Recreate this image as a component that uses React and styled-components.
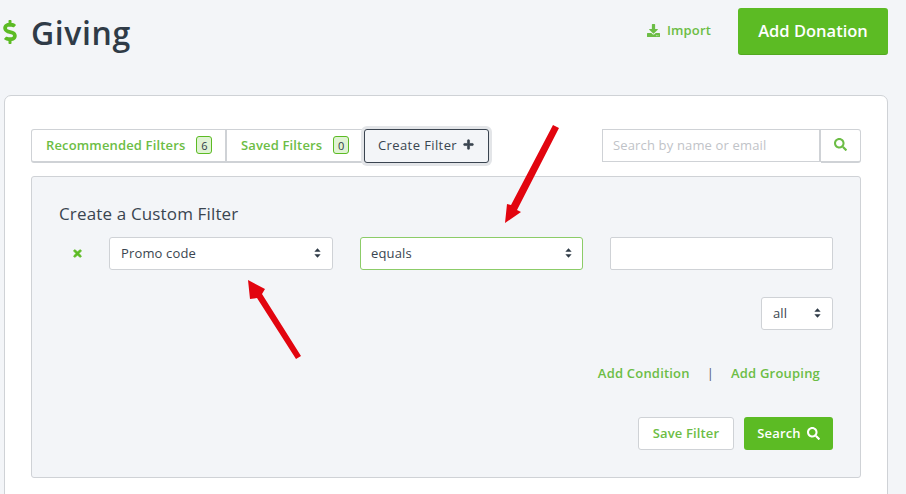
import React from "react";
import styled, { createGlobalStyle } from "styled-components";
import { FaDollarSign, FaDownload, FaPlus, FaSearch, FaTimes } from "react-icons/fa";

const green = "#5cbb24";
const linkGreen = "#6cbd45";

const GlobalStyle = createGlobalStyle`
  html, body {
    margin: 0;
    padding: 0;
    background: #f3f5f8;
    overflow: hidden;
  }
  * { box-sizing: border-box; }
`;

function Sort() {
  return (
    <SortIcon viewBox="0 0 8 11">
      <path d="M4 0 L7.6 4.2 H0.4 Z M4 11 L0.4 6.8 H7.6 Z" fill="#2f3b47" />
    </SortIcon>
  );
}

function App() {
  return (
    <Page>
      <GlobalStyle />
      <Header>
        <TitleWrap>
          <Dollar />
          <Title>Giving</Title>
        </TitleWrap>
        <HeaderActions>
          <ImportLink>
            <FaDownload size={13} />
            Import
          </ImportLink>
          <AddButton>Add Donation</AddButton>
        </HeaderActions>
      </Header>
      <Card>
        <TopRow>
          <Tabs>
            <Tab>
              Recommended Filters <Badge>6</Badge>
            </Tab>
            <Tab second>
              Saved Filters <Badge>0</Badge>
            </Tab>
            <ActiveTab>
              Create Filter <BoldPlus />
            </ActiveTab>
          </Tabs>
          <SearchBox>
            <SearchInput placeholder="Search by name or email" />
            <SearchBtn>
              <FaSearch size={13} />
            </SearchBtn>
          </SearchBox>
        </TopRow>
        <Panel>
          <PanelTitle>Create a Custom Filter</PanelTitle>
          <ConditionRow>
            <RemoveIcon />
            <Select width="224px">
              <span>Promo code</span>
              <Sort />
            </Select>
            <Select width="223px" focused pad="10px">
              <span>equals</span>
              <Sort />
            </Select>
            <TextBox />
          </ConditionRow>
          <AllRow>
            <Select width="72px">
              <span>all</span>
              <Sort />
            </Select>
          </AllRow>
          <LinksRow>
            <TextLink>Add Condition</TextLink>
            <Divider>|</Divider>
            <TextLink>Add Grouping</TextLink>
          </LinksRow>
          <ButtonRow>
            <SaveButton>Save Filter</SaveButton>
            <SearchButton>
              Search <FaSearch size={13} />
            </SearchButton>
          </ButtonRow>
        </Panel>
      </Card>
      <Arrow viewBox="0 0 906 494">
        <path
          fill="#e2050f"
          d="M296 359 L301 356 L262 294 L265 289 L248 280 L250 299 L257 298 Z"
        />
        <path
          fill="#e2050f"
          d="M553 125 L559 128 L517 210 L521 212 L505 223 L507 204 L511 205 Z"
        />
      </Arrow>
    </Page>
  );
}

export default App;

const Page = styled.div`
  position: relative;
  width: 906px;
  height: 494px;
  overflow: hidden;
  background: #f3f5f8;
  font-family: "Open Sans", "Liberation Sans", sans-serif;
  font-size: 13px;
  letter-spacing: 0.15px;
  color: #3a4550;
`;
const Header = styled.div`
  display: flex;
  justify-content: space-between;
  align-items: flex-start;
  height: 95px;
  padding: 8px 18px 0 3px;
`;
const TitleWrap = styled.div`
  display: flex;
  align-items: center;
  gap: 14px;
  height: 47px;
`;
const Dollar = styled(FaDollarSign)`
  width: 14px;
  height: 24px;
  color: ${green};
`;
const Title = styled.h1`
  margin: 1px 0 0;
  font-size: 32px;
  font-weight: 600;
  line-height: 47px;
  letter-spacing: 0.6px;
  color: #2f3b47;
`;
const HeaderActions = styled.div`
  display: flex;
  align-items: center;
  gap: 27px;
`;
const ImportLink = styled.a`
  display: flex;
  align-items: center;
  gap: 7px;
  padding-bottom: 3px;
  font-size: 13px;
  font-weight: 600;
  color: ${linkGreen};
`;
const AddButton = styled.button`
  width: 150px;
  height: 47px;
  padding: 0 0 2px;
  border: none;
  border-radius: 3px;
  background: ${green};
  color: #fff;
  font-family: inherit;
  font-size: 16.5px;
  font-weight: 600;
  box-shadow: inset 0 -1px 0 rgba(0, 0, 0, 0.1);
`;
const Card = styled.div`
  width: 884px;
  height: 420px;
  margin-left: 4px;
  padding: 33px 26px 0;
  background: #fff;
  border: 1px solid #cfd2d6;
  border-radius: 7px;
`;
const TopRow = styled.div`
  display: flex;
  justify-content: space-between;
  height: 34px;
`;
const Tabs = styled.div`
  display: flex;
  align-items: stretch;
`;
const Tab = styled.div`
  display: flex;
  align-items: center;
  gap: 11px;
  width: ${(p) => (p.second ? "136px" : "196px")};
  padding-left: 14px;
  padding-bottom: 1px;
  border: 1px solid #cfd2d6;
  border-left-width: ${(p) => (p.second ? "0" : "1px")};
  border-right-width: ${(p) => (p.second ? "0" : "2px")};
  border-radius: ${(p) => (p.second ? "0" : "3px 0 0 3px")};
  border-bottom-width: 2px;
  color: ${linkGreen};
  font-size: 13px;
  font-weight: 600;
  white-space: nowrap;
`;
const Badge = styled.span`
  display: inline-flex;
  align-items: center;
  justify-content: center;
  width: 16px;
  height: 18px;
  border: 1px solid ${green};
  border-radius: 3px;
  background: #e0f3d4;
  color: #2f3b47;
  font-size: 11px;
  font-weight: 400;
`;
const ActiveTab = styled.div`
  display: flex;
  align-items: center;
  gap: 6px;
  width: 125px;
  margin-left: 1px;
  padding-left: 13px;
  padding-bottom: 3px;
  background: #f3f5f8;
  border: 1px solid #3a4450;
  border-radius: 3px;
  box-shadow: 0 0 0 3px #e3e5e8;
  font-size: 13px;
  font-weight: 500;
  letter-spacing: 0.4px;
  white-space: nowrap;
`;
const BoldPlus = styled(FaPlus)`
  width: 11px;
  height: 11px;
  stroke: currentColor;
  stroke-width: 30;
`;
const SearchBox = styled.div`
  display: flex;
`;
const SearchInput = styled.input`
  width: 219px;
  height: 33px;
  padding: 0 10px 2px;
  border: 1px solid #cfd2d6;
  border-right-width: 2px;
  background: #fff;
  font-family: inherit;
  font-size: 13px;
  letter-spacing: 0.15px;
  outline: none;
  &::placeholder {
    color: #bfc3c8;
  }
`;
const SearchBtn = styled.button`
  width: 40px;
  height: 34px;
  padding: 0;
  border: 1px solid #cfd2d6;
  border-left: none;
  border-bottom-width: 2px;
  border-radius: 0 3px 3px 0;
  background: #fff;
  color: ${linkGreen};
`;
const Panel = styled.div`
  margin-top: 13px;
  height: 302px;
  padding: 26px 27px 0;
  background: #f3f5f8;
  border: 1px solid #cfd2d6;
  border-radius: 3px;
`;
const PanelTitle = styled.h3`
  margin: 0 0 12px;
  font-size: 17px;
  font-weight: 500;
  line-height: 22px;
  letter-spacing: 0.15px;
`;
const ConditionRow = styled.div`
  display: flex;
  align-items: center;
`;
const RemoveIcon = styled(FaTimes)`
  width: 11px;
  height: 11px;
  margin: 0 26px 0 13px;
  color: ${green};
  stroke: currentColor;
  stroke-width: 40;
`;
const Select = styled.div`
  display: flex;
  align-items: center;
  justify-content: space-between;
  width: ${(p) => p.width};
  height: 33px;
  margin-right: ${(p) => (p.focused ? "27px" : "0")};
  margin-left: ${(p) => (p.focused ? "27px" : "0")};
  padding: 0 ${(p) => (p.focused ? "10px" : "11px")} 1px ${(p) => p.pad || "11px"};
  background: #fff;
  border: 1px solid ${(p) => (p.focused ? "#8ccc68" : "#cfd2d6")};
  border-radius: 3px;
  font-size: 13px;
`;
const SortIcon = styled.svg`
  width: 7px;
  height: 10px;
`;
const TextBox = styled.div`
  width: 223px;
  height: 33px;
  background: #fff;
  border: 1px solid #cfd2d6;
  border-radius: 2px;
`;
const AllRow = styled.div`
  display: flex;
  justify-content: flex-end;
  margin-top: 27px;
`;
const LinksRow = styled.div`
  display: flex;
  justify-content: flex-end;
  align-items: center;
  height: 20px;
  margin-top: 33px;
  padding-right: 13px;
`;
const TextLink = styled.a`
  color: ${linkGreen};
  font-size: 13px;
  font-weight: 600;
  letter-spacing: 0.2px;
`;
const Divider = styled.span`
  margin: 0 17px;
  color: #55606e;
  font-size: 13px;
`;
const ButtonRow = styled.div`
  display: flex;
  justify-content: flex-end;
  gap: 10px;
  margin-top: 34px;
`;
const SaveButton = styled.button`
  width: 96px;
  height: 33px;
  padding: 0 0 1px;
  background: #fff;
  border: 1px solid #cfd2d6;
  border-radius: 3px;
  color: ${linkGreen};
  font-family: inherit;
  font-size: 13px;
  font-weight: 600;
  letter-spacing: 0.15px;
`;
const SearchButton = styled.button`
  display: flex;
  align-items: center;
  justify-content: center;
  gap: 6px;
  width: 89px;
  height: 33px;
  padding: 0 0 1px;
  background: ${green};
  border: none;
  border-radius: 3px;
  color: #fff;
  font-family: inherit;
  font-size: 13px;
  font-weight: 600;
  letter-spacing: 0.15px;
`;
const Arrow = styled.svg`
  position: absolute;
  top: 0;
  left: 0;
  width: 906px;
  height: 494px;
  pointer-events: none;
`;
